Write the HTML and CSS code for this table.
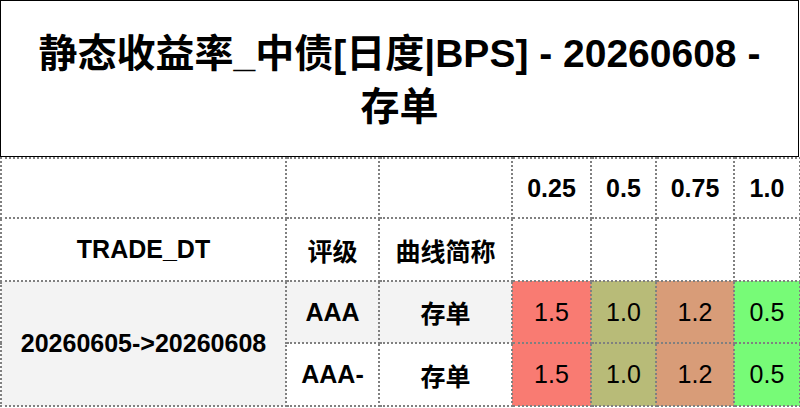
FILE: index.html
```html
<!DOCTYPE html>
<html lang="zh">
<head>
<meta charset="utf-8">
<link rel="stylesheet" href="styles.css">
</head>
<body>
<div class="sheet">
  <div class="title">静态收益率_中债[日度|BPS] - 20260608 -<br>存单</div>
  <table class="grid">
    <colgroup>
      <col class="c-date"><col class="c-rate"><col class="c-curve">
      <col class="c-t1"><col class="c-t2"><col class="c-t3"><col class="c-t4">
    </colgroup>
    <thead>
      <tr class="r-tenor">
        <th></th><th></th><th></th>
        <th>0.25</th><th>0.5</th><th>0.75</th><th>1.0</th>
      </tr>
      <tr class="r-names">
        <th>TRADE_DT</th><th>评级</th><th>曲线简称</th>
        <th></th><th></th><th></th><th></th>
      </tr>
    </thead>
    <tbody>
      <tr class="r-body shade">
        <th class="date" rowspan="2">20260605-&gt;20260608</th>
        <th>AAA</th><th>存单</th>
        <td class="v-red">1.5</td><td class="v-olive">1.0</td><td class="v-tan">1.2</td><td class="v-green">0.5</td>
      </tr>
      <tr class="r-body">
        <th>AAA-</th><th>存单</th>
        <td class="v-red">1.5</td><td class="v-olive">1.0</td><td class="v-tan">1.2</td><td class="v-green">0.5</td>
      </tr>
    </tbody>
  </table>
</div>
</body>
</html>
```
FILE: styles.css
```css
html, body {
  margin: 0;
  padding: 0;
  background: #ffffff;
}
body {
  font-family: "Liberation Sans", "Noto Sans CJK SC", Arial, sans-serif;
  color: #000;
}
.sheet {
  width: 799px;
}
.title {
  box-sizing: border-box;
  height: 157px;
  border: 1px solid #000;
  display: flex;
  align-items: center;
  justify-content: center;
  text-align: center;
  font-size: 39px;
  font-weight: bold;
  line-height: 53px;
  padding-top: 2px;
}
.grid {
  width: 799px;
  table-layout: fixed;
  border-collapse: collapse;
  font-size: 25px;
}
.grid th, .grid td {
  border: 2px dotted #808080;
  padding: 0;
  text-align: center;
  vertical-align: middle;
}
.grid th { font-weight: bold; }
.grid td { font-weight: normal; }
.c-date { width: 285px; }
.c-rate { width: 93px; }
.c-curve { width: 133px; }
.c-t1 { width: 79px; }
.c-t2 { width: 65px; }
.c-t3 { width: 78px; }
.c-t4 { width: 66px; }
.r-tenor { height: 60px; }
.r-names { height: 63px; }
.r-body { height: 62px; }
.r-body + .r-body { height: 63px; }
.shade th { background: #f3f3f3; }
.v-red { background: #f97b72; }
.v-olive { background: #b8bb78; }
.v-tan { background: #d89c78; }
.v-green { background: #77fb77; }
```
